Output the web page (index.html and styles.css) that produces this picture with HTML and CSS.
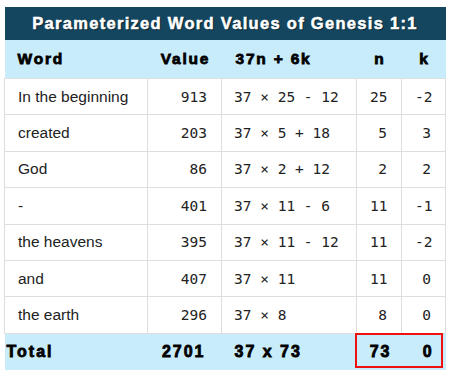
FILE: index.html
```html
<!DOCTYPE html>
<html>
<head>
<meta charset="utf-8">
<link rel="stylesheet" href="styles.css">
</head>
<body>
<div class="wrap">
  <table class="gt">
    <colgroup>
      <col class="c-word"><col class="c-val"><col class="c-form"><col class="c-n"><col class="c-k">
    </colgroup>
    <thead>
      <tr class="title"><th colspan="5">Parameterized Word Values of Genesis 1:1</th></tr>
      <tr class="head">
        <th class="l">Word</th>
        <th class="c">Value</th>
        <th class="l f">37n + 6k</th>
        <th class="c">n</th>
        <th class="c">k</th>
      </tr>
    </thead>
    <tbody>
      <tr><td class="w">In the beginning</td><td class="num">913</td><td class="form">37 × 25 - 12</td><td class="num">25</td><td class="num">-2</td></tr>
      <tr><td class="w">created</td><td class="num">203</td><td class="form">37 × 5 + 18</td><td class="num">5</td><td class="num">3</td></tr>
      <tr><td class="w">God</td><td class="num">86</td><td class="form">37 × 2 + 12</td><td class="num">2</td><td class="num">2</td></tr>
      <tr><td class="w">-</td><td class="num">401</td><td class="form">37 × 11 - 6</td><td class="num">11</td><td class="num">-1</td></tr>
      <tr><td class="w">the heavens</td><td class="num">395</td><td class="form">37 × 11 - 12</td><td class="num">11</td><td class="num">-2</td></tr>
      <tr><td class="w">and</td><td class="num">407</td><td class="form">37 × 11</td><td class="num">11</td><td class="num">0</td></tr>
      <tr><td class="w">the earth</td><td class="num">296</td><td class="form">37 × 8</td><td class="num">8</td><td class="num">0</td></tr>
    </tbody>
    <tfoot>
      <tr class="total">
        <td class="t-label">Total</td>
        <td class="t-val">2701</td>
        <td class="t-form">37 x 73</td>
        <td class="t-n">73</td>
        <td class="t-k">0</td>
      </tr>
    </tfoot>
  </table>
  <div class="highlight"></div>
</div>
</body>
</html>
```

FILE: styles.css
```css
html, body {
  margin: 0;
  padding: 0;
  background: #ffffff;
}

.wrap {
  position: relative;
  width: 441px;
  margin: 7px 0 0 4px;
}

.gt {
  width: 441px;
  border-collapse: collapse;
  table-layout: fixed;
  font-family: "Liberation Sans", Arial, sans-serif;
  color: #222;
}

.c-word { width: 143px; }
.c-val { width: 74px; }
.c-form { width: 135px; }
.c-n { width: 45px; }
.c-k { width: 44px; }

.title th {
  background: #14465f;
  color: #ffffff;
  height: 33px;
  padding: 0;
  font-size: 16.5px;
  font-weight: bold;
  letter-spacing: 1.3px;
  -webkit-text-stroke: 0.5px #ffffff;
  text-shadow: 1px 1px 1px rgba(0, 0, 0, 0.6);
  text-align: center;
  vertical-align: middle;
}

.head th {
  background: #c9ecfa;
  color: #000;
  height: 38px;
  padding: 0;
  font-size: 15.5px;
  font-weight: bold;
  letter-spacing: 1.8px;
  -webkit-text-stroke: 0.8px #000;
  vertical-align: middle;
}

.head th.l { text-align: left; padding-left: 13px; }
.head th.f { padding-left: 14px; }
.head th.c { text-align: center; padding-left: 2px; }

tbody td {
  height: 35.4px;
  padding: 0 14px 0 13px;
  border: 1px solid #dedede;
  background: #fff;
  vertical-align: middle;
  white-space: nowrap;
}

tbody td.w {
  font-size: 15.5px;
  color: #222;
}

tbody td.num {
  font-family: "DejaVu Sans Mono", monospace;
  font-size: 14.5px;
  text-align: right;
  color: #222;
}

tbody td.form {
  font-family: "DejaVu Sans Mono", monospace;
  font-size: 14.5px;
  text-align: left;
  padding-left: 12px;
  color: #222;
}

.total td {
  background: #c9ecfa;
  color: #000;
  height: 36px;
  padding: 0;
  font-size: 16px;
  font-weight: bold;
  letter-spacing: 2px;
  -webkit-text-stroke: 0.8px #000;
  vertical-align: middle;
  white-space: nowrap;
}

.total .t-label { padding-left: 2px; }
.total .t-val { text-align: right; padding-right: 16px; }
.total .t-form { padding-left: 13px; }
.total .t-n { text-align: right; padding-right: 10px; }
.total .t-k { text-align: right; padding-right: 12px; }

.highlight {
  position: absolute;
  left: 351px;
  top: 326px;
  width: 84px;
  height: 31px;
  border: 2px solid #ee1111;
  pointer-events: none;
}
```
